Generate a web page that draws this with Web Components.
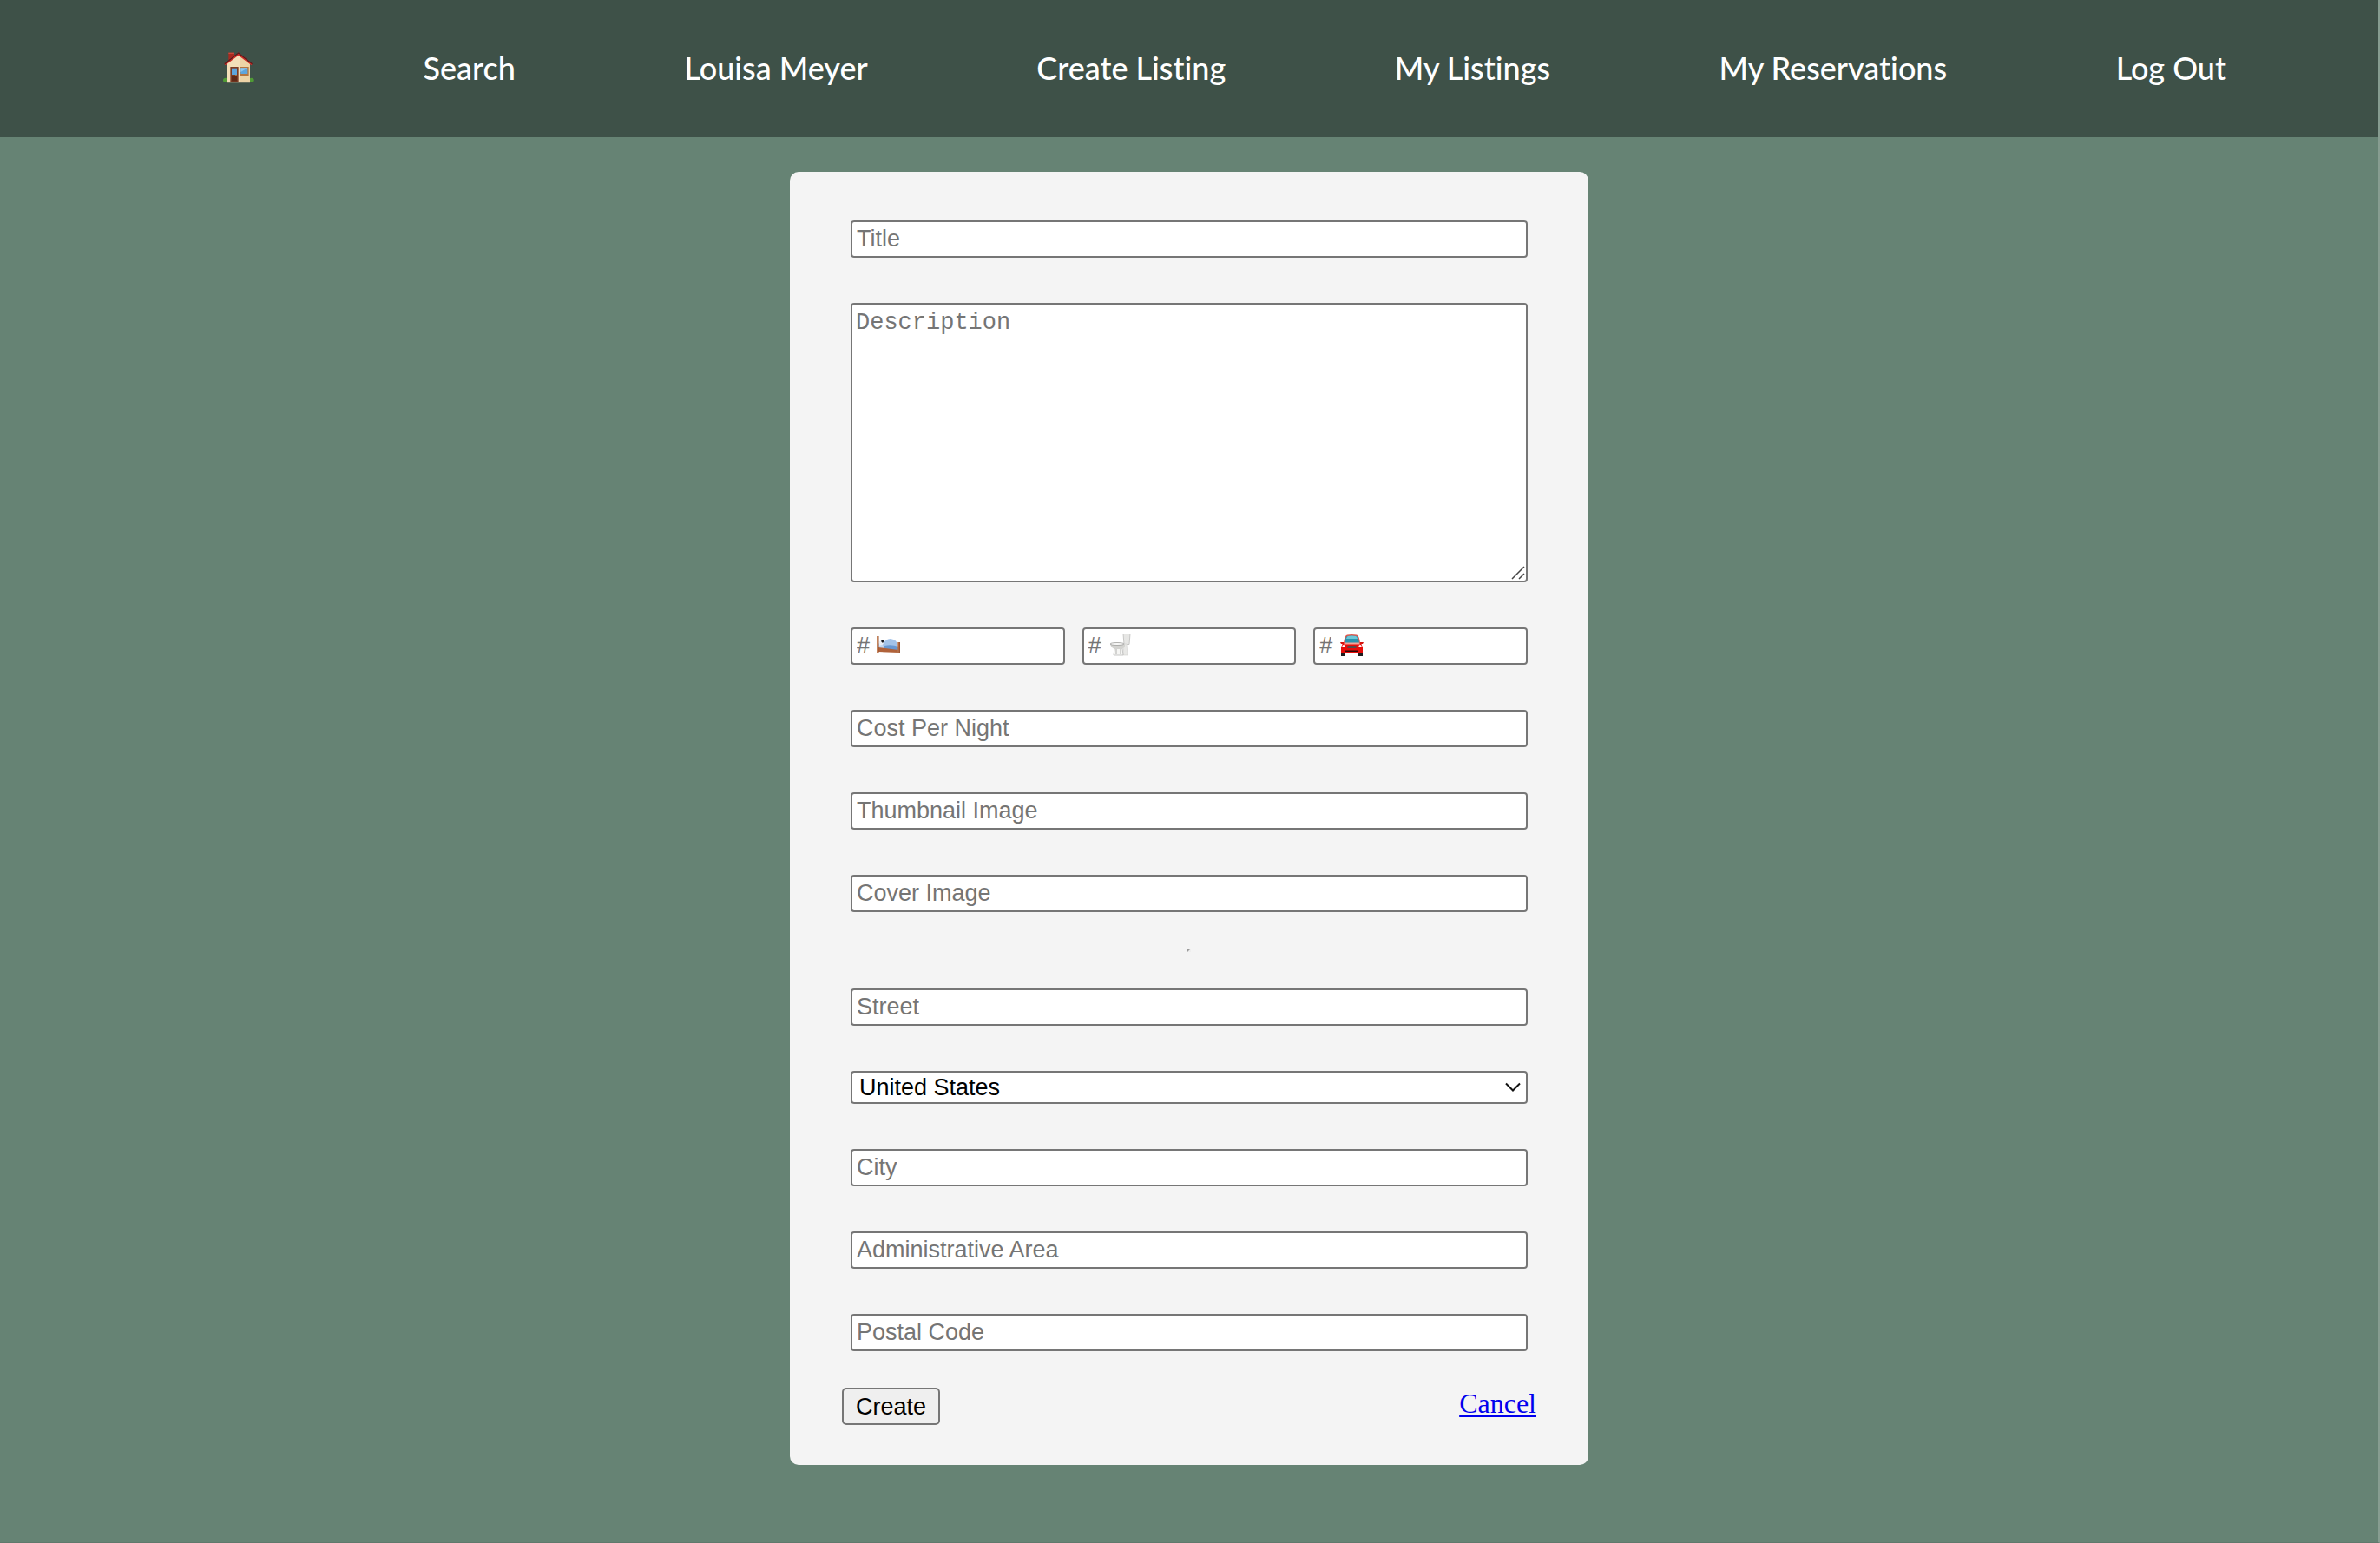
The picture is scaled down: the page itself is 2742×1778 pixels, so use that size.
<!DOCTYPE html>
<html lang="en">
<head>
<meta charset="utf-8">
<title>Create Listing</title>
<style>
  html { height: 100%; }
  body { margin: 0; min-height: 100%; background: #668374; }
</style>
</head>
<body>
<app-page>
  <site-nav slot="header">
    <nav-link href="#home" label="Home">
      <svg width="36" height="36" viewBox="20 28 108 108" aria-hidden="true">
        <ellipse cx="29" cy="125" rx="9" ry="8" fill="#4f9a35"/>
        <ellipse cx="118" cy="125" rx="9" ry="8" fill="#4f9a35"/>
        <path d="M39 30h20v24L39 68z" fill="#a92a20"/>
        <path d="M39 30h20v4H39z" fill="#c8483a"/>
        <path d="M33 66 73 36l40 30v66H33z" fill="#f3dfb9"/>
        <path d="M80 42l33 24v66H80z" fill="#ecd3a6"/>
        <path d="M73 29 122 68l-4 6L73 39 28 74l-4-6z" fill="#cf2a25"/>
        <path d="M73 29 122 68l-2 3L73 33 26 71l-2-3z" fill="#4a2020"/>
        <path d="M45 79h28v52H45z" fill="#7b3b23"/>
        <path d="M50 84h18v22H50z" fill="#5ea5dc"/>
        <path d="M50 111h18v17H50z" fill="#5f2917"/>
        <circle cx="65" cy="109" r="2.500" fill="#e6b04c"/>
        <path d="M77 79h32v31H77z" fill="#b5763f"/>
        <path d="M81 83h24v20H81z" fill="#5ea5dc"/>
        <path d="M81 83h24l-24 14z" fill="#8cc6ee"/>
        <path d="M35 130h78v4H35z" fill="#b9a789"/>
      </svg>
    </nav-link>
    <nav-link href="#search">Search</nav-link>
    <nav-link href="#profile">Louisa Meyer</nav-link>
    <nav-link href="#create">Create Listing</nav-link>
    <nav-link href="#listings">My Listings</nav-link>
    <nav-link href="#reservations">My Reservations</nav-link>
    <nav-link href="#logout">Log Out</nav-link>
  </site-nav>
  <listing-form></listing-form>
</app-page>

<script>
const define = (name, html, setup) => {
  const template = document.createElement('template');
  template.innerHTML = html;
  customElements.define(name, class extends HTMLElement {
    constructor() {
      super();
      this.attachShadow({ mode: 'open' }).append(template.content.cloneNode(true));
    }
    connectedCallback() {
      if (setup) setup(this, this.shadowRoot);
    }
  });
};

define('app-page', `
  <style>
    :host {
      display: flex; flex-direction: column; box-sizing: border-box;
      min-height: 100vh; background: #668374;
      border-right: 2px solid #879d91; border-bottom: 1px solid #5f796c;
    }
    main { display: flex; justify-content: center; padding: 40px 20px; }
  </style>
  <slot name="header"></slot>
  <main><slot></slot></main>
`);

define('site-nav', `
  <style>
    :host { display: block; background: #3e5148; }
    nav {
      display: flex; align-items: center; justify-content: space-between;
      box-sizing: border-box; min-height: 158px; padding: 0 175px 3px 257px;
    }
  </style>
  <nav aria-label="Main"><slot></slot></nav>
`);

define('nav-link', `
  <style>
    :host { display: block; }
    a {
      display: flex; align-items: center; color: #fff; text-decoration: none;
      font: 500 36px/48px "Gill Sans", Lato, sans-serif; white-space: nowrap;
      font-variant-ligatures: none;
    }
  </style>
  <a><slot></slot></a>
`, (host, root) => {
  const a = root.querySelector('a');
  a.href = host.getAttribute('href');
  if (host.hasAttribute('label')) a.setAttribute('aria-label', host.getAttribute('label'));
});

const controlStyles = `
  :host { display: block; flex: 1; min-width: 0; position: relative; }
  input, textarea, select {
    display: block; box-sizing: border-box; width: 100%; margin: 0;
    border: 2px solid #767676; border-radius: 4px; background: #fff; color: #000;
    font: 27px/35px "Liberation Sans", Arial, sans-serif; outline-offset: 2px;
  }
  input { height: 43px; padding: 2px 5px; }
  ::placeholder { color: #757575; opacity: 1; }
  svg, ::slotted(svg) { position: absolute; pointer-events: none; }
`;

const label = (selector) => (host, root) => {
  const control = root.querySelector(selector);
  control.setAttribute('aria-label', host.getAttribute('label'));
  if (selector !== 'select') control.placeholder = host.getAttribute('placeholder') || host.getAttribute('label');
};

define('text-field', `
  <style>${controlStyles}</style>
  <input type="text">
`, label('input'));

define('count-field', `
  <style>${controlStyles}
    ::slotted(svg) { left: 30px; top: 7px; width: 28px; height: 28px; }
  </style>
  <input type="text" inputmode="numeric"><slot></slot>
`, label('input'));

define('area-field', `
  <style>${controlStyles}
    textarea {
      height: 322px; padding: 6px 4px; resize: none;
      font: 27px/30px "Liberation Mono", "Courier New", monospace;
    }
    svg { right: 3px; bottom: 3px; }
  </style>
  <textarea></textarea>
  <svg width="16" height="16" viewBox="0 0 16 16" fill="none" stroke="#444" stroke-width="1.500" aria-hidden="true">
    <path d="M1 15 15 1M9 15l6-6"/>
  </svg>
`, label('textarea'));

define('select-field', `
  <style>${controlStyles}
    select { appearance: none; height: 38px; padding: 0 36px 0 8px; line-height: 34px; }
    svg { right: 8px; top: 13px; }
  </style>
  <select>
    <option>United States</option>
    <option>Canada</option>
    <option>Mexico</option>
  </select>
  <svg width="18" height="12" viewBox="0 0 18 12" fill="none" stroke="#111" stroke-width="2" aria-hidden="true">
    <path d="M1 1.500l8 8 8-8"/>
  </svg>
`, label('select'));

define('field-row', `
  <style>
    :host { display: flex; gap: 20px; margin: 26px 10px; }
  </style>
  <slot></slot>
`);

define('listing-form', `
  <style>
    :host { display: block; width: 100%; max-width: 920px; }
    form {
      display: flow-root; box-sizing: border-box; padding: 30px 60px;
      background: #f4f4f4; border-radius: 10px;
    }
    .fields { display: flex; flex-direction: column; }
    hr {
      width: 0; margin: 16px auto; border: 2px solid;
      border-color: #9a9a9a #eee #eee #9a9a9a;
    }
    footer { display: flex; justify-content: space-between; align-items: flex-start; margin: 16px 0; }
    button {
      height: 43px; margin: 0; padding: 0 14px; box-sizing: border-box;
      border: 2px solid #767676; border-radius: 5px; background: #efefef; color: #000;
      font: 27px/38px "Liberation Sans", Arial, sans-serif;
    }
    a { color: #00e; font: 32px/36px "Liberation Serif", "Times New Roman", serif; text-decoration-thickness: 3px; }
  </style>
  <form>
    <div class="fields">
      <field-row><text-field label="Title"></text-field></field-row>
      <field-row><area-field label="Description"></area-field></field-row>
      <field-row>
        <count-field label="Number of beds" placeholder="#">
          <svg viewBox="0 0 28 28" aria-hidden="true">
            <path d="M2 12 6 8l17 4 2 3v5H2z" fill="#c3d7ef"/>
            <path d="M3 9q3-2 5 0l1 3-6 2z" fill="#e9eef5"/>
            <path d="M5 9q1-3 4-1l-2 3z" fill="#16191f"/>
            <path d="M7 13Q10 6 16 6q8 1 8 8v4H10z" fill="#a3c3e9"/>
            <path d="M9 14q8-2 16 1v5L9 18z" fill="#6898d2"/>
            <path d="M2 16l23 3v3L2 21z" fill="#b0623a"/>
            <path d="M0 3h2.500v20H0zM24.500 10H27v13h-2.500z" fill="#9c5532"/>
            <path d="M0 3h1v20H0zM24.500 10h1v13h-1z" fill="#c4835a"/>
          </svg>
        </count-field>
        <count-field label="Number of bathrooms" placeholder="#">
          <svg viewBox="0 0 28 28" aria-hidden="true">
            <path d="M17 .5h8l-1 12h-6z" fill="#e6e6e4" stroke="#bdbdbb" stroke-width=".8"/>
            <path d="M18 12h3l1 13h-5z" fill="#e8e8e6" stroke="#d0d0ce" stroke-width=".6"/>
            <path d="M7 17h9l1 8H6z" fill="#f6f6f4" stroke="#b9b9b7" stroke-width=".8"/>
            <path d="M2 12h17q1 4-4 6H8q-5-1-6-6z" fill="#d3d3d0"/>
            <ellipse cx="10" cy="12" rx="8" ry="1.500" fill="#f8f8f7" stroke="#9d9d9b" stroke-width=".8"/>
            <path d="M9 18v6M14 18v6" stroke="#b0b0ae" stroke-width="1"/>
          </svg>
        </count-field>
        <count-field label="Number of parking spaces" placeholder="#">
          <svg viewBox="0 0 28 28" aria-hidden="true">
            <path d="M2 20h5v6H2zM22 20h5v6h-5z" fill="#1d1d1f"/>
            <path d="M5 11Q6 2 9 1.500q5-1 11 0Q23 2 24 11z" fill="#e2574c"/>
            <path d="M6 11Q7 4 9 3q5-1 11 0 2 1 3 8z" fill="#2a93ad"/>
            <path d="M8 6q1-3 2-3 4-1 9 0 1 0 2 3z" fill="#6cc7d8"/>
            <path d="M1 10h4l1 2H2zM28 10h-4l-1 2h4z" fill="#d1140f"/>
            <path d="M4 11h21l2 5v6H2v-6z" fill="#e60d0a"/>
            <path d="M6 10.500h17l1 2H5z" fill="#f2a49a"/>
            <circle cx="5" cy="14.500" r="1.600" fill="#fff"/><circle cx="24" cy="14.500" r="1.600" fill="#fff"/>
            <rect x="9" y="14" width="11" height="3" rx="1.500" fill="#5b4648"/>
            <path d="M7 19.500h15v1.500H7z" fill="#2a0808"/>
          </svg>
        </count-field>
      </field-row>
      <field-row><text-field label="Cost Per Night"></text-field></field-row>
      <field-row><text-field label="Thumbnail Image"></text-field></field-row>
      <field-row><text-field label="Cover Image"></text-field></field-row>
      <hr>
      <field-row><text-field label="Street"></text-field></field-row>
      <field-row><select-field label="Country"></select-field></field-row>
      <field-row><text-field label="City"></text-field></field-row>
      <field-row><text-field label="Administrative Area"></text-field></field-row>
      <field-row><text-field label="Postal Code"></text-field></field-row>
    </div>
    <footer>
      <button type="submit">Create</button>
      <a href="#cancel">Cancel</a>
    </footer>
  </form>
`);
</script>
</body>
</html>
